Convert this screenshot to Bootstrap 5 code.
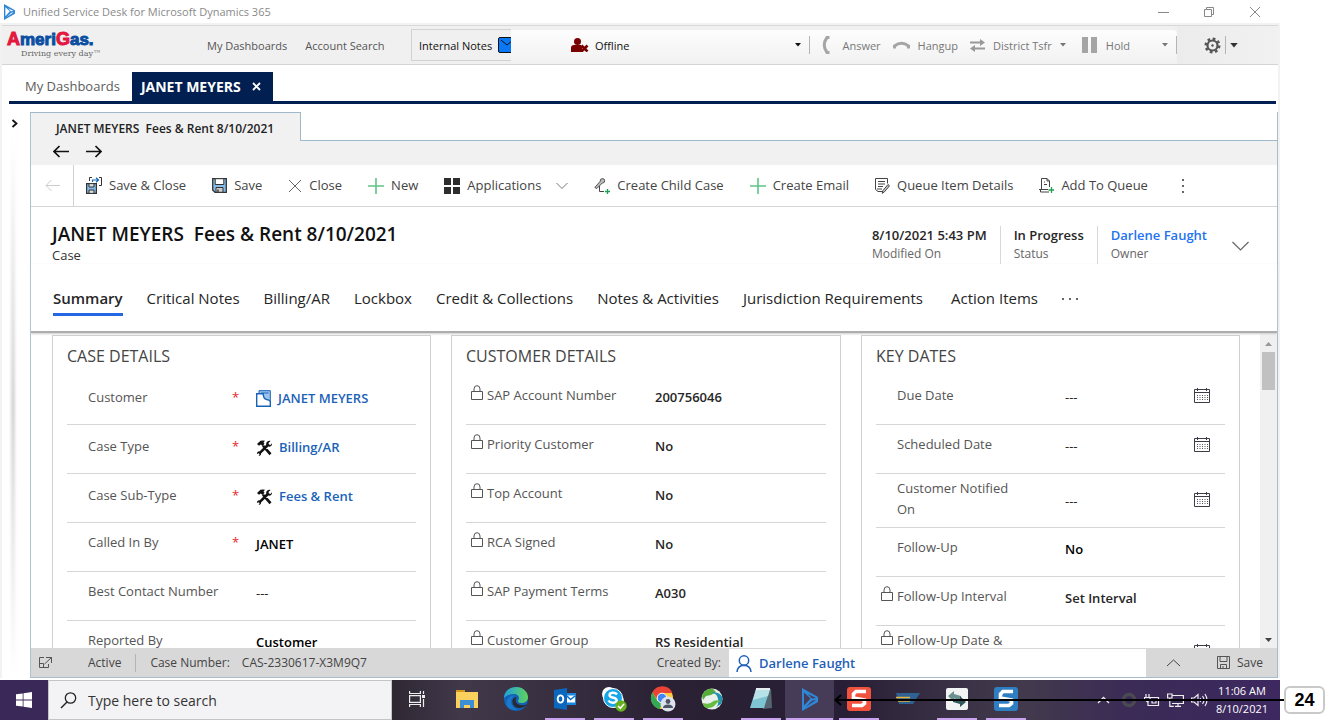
<!DOCTYPE html>
<html lang="en">
<head>
<meta charset="utf-8">
<meta name="viewport" content="width=device-width, initial-scale=1">
<title>Unified Service Desk for Microsoft Dynamics 365</title>
<link href="https://cdn.jsdelivr.net/npm/bootstrap@5.3.0/dist/css/bootstrap.min.css" rel="stylesheet">
<style>
  body { font-family: "Open Sans", "Noto Sans", sans-serif; font-size: 13px; line-height: 21px; color: #333; background: #fff; }
  button, input, select { font: inherit; color: inherit; }
  button { background: none; border: 0; padding: 0; }
  a { text-decoration: none; color: inherit; }
  svg { display: block; flex: none; }
  .desktop { height: 100vh; margin-right: 53px; }
  /* window chrome */
  .title-bar { height: 23px; padding-left: 4px; padding-right: 19px; font-size: 11px; color: #8a8a8a; background: #fff; }
  .window-controls { gap: 34px; }
  .window { background: #f2f2f2; padding: 2px 2px 0; }
  .app-bar { height: 40px; background: #f0f0f0; border-top: 1px solid #d8d8d8; border-bottom: 1px solid #d4d4d4; font-size: 11px; color: #555; }
  .app-bar .brand { width: 205px; padding-left: 5px; }
  .brand-name { font: 900 17px/16px "Liberation Sans", Arial, sans-serif; color: #0a4ea2; -webkit-text-stroke: 1px currentColor; }
  .brand-name b { color: #e4173e; font-size: 18px; font-weight: 900; }
  .brand-line { font: 8px/11px "DejaVu Serif", serif; color: #666; padding-left: 14px; white-space: nowrap; }
  .app-links { width: 204px; gap: 18px; }
  .notes-box { width: 100px; height: 32px; padding-left: 7px; border: 1px solid #d2d2d2; border-right: 0; color: #111; overflow: hidden; }
  .notes-box input { appearance: none; width: 24px; height: 16px; margin: 0; background: #0a78f5; border: 1px solid #111; border-radius: 2px; flex: none; }
  .notes-box label { position: relative; gap: 6px; }
  .notes-box svg { position: absolute; right: 8px; top: 4px; }
  .phone-bar { align-self: stretch; margin-top: 4px; padding-bottom: 4px; background: linear-gradient(#fdfdfd, #f1f1f1); border-radius: 0 4px 0 0; color: #777; padding-left: 60px; }
  .phone-bar select { appearance: none; border: 0; background: none; color: #111; padding: 0; margin-left: 6px; }
  .phone-bar button { display: flex; align-items: center; gap: 8px; margin-left: 12px; }
  .phone-bar .answer { gap: 12px; }
  .bar-tick { width: 1px; height: 18px; background: #b4b4b4; }
  .app-tools { width: 101px; padding-left: 27px; background: linear-gradient(90deg, #ececec, #f1f1f1); align-self: stretch; }
  .workspace { background: #fff; }
  .session-tabs { height: 39px; margin: 0 2px 0 7px; padding-top: 7px; border-bottom: 3px solid #021f52; }
  .session-tabs button { height: 29px; }
  .session-tabs .idle { padding: 0 12px 0 16px; color: #5c5c5c; }
  .session-tabs .current { padding: 0 12px 0 9px; background: #021f52; color: #fff; font-weight: 700; gap: 11px; font-size: 14px; }
  /* collapsed left rail */
  .rail { width: 28px; padding: 15px 0 0 9px; }
  .rail-shade { width: 8px; margin-top: 8px; margin-left: -2px; background: linear-gradient(#fff, transparent 50%, #fff), linear-gradient(90deg, #fff, #d4d4d4, #fff); }
  .work-panel { background: #fff; border-left: 1px solid #a9c3d3; border-right: 1px solid #a9bccb; border-bottom: 1px solid #a9bccb; margin-top: 8px; }
  .page-tab { width: 270px; height: 29px; border-top: 1px solid #9fb9cb; border-right: 1px solid #9fb9cb; background: #f1f1f1; font-size: 12px; font-weight: 600; color: #222; padding: 2px 0 0 25px; }
  .page-tab-rest { border-bottom: 1px solid #9fb9cb; background: #fff; }
  .history { height: 24px; background: #f1f1f1; padding-left: 22px; gap: 17px; }
  .history button { margin-top: -4px; }
  .command-bar { height: 42px; border-bottom: 1px solid #d4d4d4; color: #444; }
  .command-bar .go-back { width: 43px; border-right: 1px solid #d0d0d0; }
  .command-bar .commands { padding-left: 12px; gap: 26px; }
  .commands button { gap: 7px; display: flex; align-items: center; white-space: nowrap; }
  .record-head { padding: 15px 28px 0 21px; }
  .record-head h1 { font-size: 19px; line-height: 24px; font-weight: 600; color: #111; margin: 0; }
  .record-kind { line-height: 18px; }
  .facts > div { padding: 0 13px; height: 38px; border-left: 1px solid #d8d8d8; font-size: 12px; line-height: 17px; color: #666; }
  .facts > div:first-child { border: 0; }
  .facts strong { display: block; font-size: 13px; line-height: 19px; font-weight: 600; color: #262626; }
  .facts .user { color: #2273f0; }
  .head-toggle { margin-left: 12px; padding-top: 6px; }
  .form-tabs { padding: 21px 0 15px 22px; gap: 24px; font-size: 15px; line-height: 27px; color: #262626; border-bottom: 2px solid #adadad; box-shadow: 0 1px 2px #ccc; z-index: 1; position: relative; }
  .form-tabs button { height: 31px; display: flex; white-space: nowrap; }
  .form-tabs .on { font-weight: 600; border-bottom: 3px solid #2566e3; }
  /* form sections */
  .form-body { min-height: 0; flex: 1 1 0; overflow: hidden; }
  .sections { display: grid; grid-template-columns: 379fr 390fr 379fr; gap: 20px; padding: 2px 20px 0 21px; height: 1px; }
  .section { border: 1px solid #d0d0d0; padding: 8px 14px 0; height: 420px; }
  .section h2 { font-size: 16px; line-height: 24px; font-weight: 400; color: #444; margin: 0; padding-bottom: 8px; }
  .field { min-height: 49px; border-bottom: 1px solid #d6d6d6; display: flex; padding-top: 9px; }
  .field.tall { height: 54px; padding-top: 4px; }
  .field .pre { width: 21px; padding-left: 5px; flex: none; }
  .field .cap { width: 142px; flex: none; color: #555; }
  .field .req { width: 26px; padding-left: 2px; flex: none; color: #e8262b; }
  .field .val { flex: 1; margin-top: 2px; font-weight: 600; color: #262626; white-space: nowrap; display: flex; align-items: center; height: 21px; gap: 7px; }
  .field.tall .val { margin-top: 13px; }
  .field a { color: #1b62b9; font-size: 13px; }
  .field.lookup { padding-top: 11px; }
  .field.lookup .val { margin-top: 1px; }
  .field .none { font-weight: 400; }
  .field .pick { margin: -4px 15px 0 auto; }
  .scroll-rail { width: 17px; background: #f0f0f0; padding: 9px 0 6px; z-index: 0; }
  .scroll-thumb { width: 13px; height: 38px; background: #c1c1c1; margin-top: 6px; }
  .status-bar { height: 29px; background: #d8d8d8; font-size: 12px; color: #444; padding-left: 8px; }
  .status-bar .state { margin-left: 36px; }
  .status-bar .bar-tick { margin: 0 14px; }
  .status-bar .case-no { margin-left: 12px; }
  .status-bar .save { gap: 7px; margin: 0 14px 0 16px; }
  .creator { flex: 1 1 417px; max-width: 417px; align-self: stretch; background: #fff; padding-left: 7px; color: #1f5fb8; font-weight: 600; font-size: 13px; gap: 7px; border-top: 1px solid #d8d8d8; }
  /* Windows taskbar */
  .taskbar { height: 40px; margin-top: 2px; background: linear-gradient(90deg, #3a2858 0, #3a2858 4%, #2c2630 30%, #41384a 36%, #372f40 44%, #2a2134 52%, #281f36 66%, #352c42 72%, #423a4c 80%, #3b2b56 88%, #3d2860); color: #fff; }
  .start { width: 48px; }
  .search { width: 344px; height: 40px; background: #f3f3f5; border: 1px solid #c4c4c8; padding-left: 11px; gap: 11px; }
  .search input { border: 0; background: none; outline: 0; width: 260px; font-size: 14px; padding: 0; }
  .search input::placeholder { color: #333; opacity: 1; }
  .app-btn { width: 49px; height: 40px; display: flex; align-items: center; justify-content: center; border-bottom: 2px solid transparent; position: relative; }
  .app-btn.open::after { content: ""; position: absolute; left: 5px; right: 4px; bottom: -2px; height: 2px; background: #c9a2f0; }
  .app-btn.active { background: #473c58; }
  .app-btn.active::after { left: 1px; right: 1px; }
  .task-view { width: 50px; }
  .tray { gap: 7px; padding-right: 11px; }
  .clock { font-size: 11px; line-height: 18px; text-align: center; width: 54px; }
  /* numbered callout over the desktop */
  .callout { position: absolute; right: 8px; bottom: 6px; left: 834px; z-index: 5; pointer-events: none; }
  .callout-line { height: 2px; background: #000; margin-left: 2px; }
  .callout-no { width: 41px; height: 28px; border: 2px solid #c9c9c9; border-radius: 6px; background: #fff; color: #000; font: 700 18px/24px "Liberation Sans", Arial, sans-serif; text-align: center; }
  .callout svg { margin-right: -7px; z-index: 1; }
</style>
</head>
<body class="overflow-hidden position-relative">
<svg width="0" height="0" class="position-absolute" aria-hidden="true">
  <symbol id="lock" viewBox="0 0 12 15"><path d="M.5 6.500h11v8H.5zM3 6.500V4a3 3.300 0 0 1 6 0v2.500" fill="none" stroke="#555"/></symbol>
  <symbol id="cal" viewBox="0 0 16 15"><path d="M.5 1.500h15v13H.5zM.5 4.500h15M3.500 0v3M12.500 0v3" fill="none" stroke="#3c3c46"/><path d="M3 7.500h11M3 9.500h11M3 11.500h11" stroke="#555" stroke-dasharray="1 1.500"/></symbol>
  <symbol id="tools" viewBox="0 0 16 16"><path d="M1 4 4.500.8Q7 0 9 .8L7.500 2.500l1 1.300L6.500 6 4.800 4.500 3 5.800zM6 6.500 8 5l7.500 8.300-2 2zM14.500 1l-2 2 .5 1.500 1.500.4L16 3.200c.3 2.300-1.500 4-3.600 3.400L5 13.500c.3 1.300-1 2.500-2.400 2.300l1-1.600-.8-.9-1.800.8c-.2-1.700 1-3 2.500-2.700l6.700-6.600C9.700 2.500 12 .2 14.500 1z" fill="#111"/></symbol>
  <symbol id="disk" viewBox="0 0 15 15"><path d="M.7.7h13.600v13.600H3L.7 12z" fill="#85bce9" stroke="#333" stroke-width="1.300"/><path d="M3.200.7h8.600v5.800H3.200z" fill="#fff" stroke="#333"/><path d="M4 9.500h7v4.800H4z" fill="#ccc" stroke="#333"/><path d="M6 11.500v3" stroke="#333" stroke-width="1.300"/></symbol>
  <symbol id="plus" viewBox="0 0 16 16"><path d="M8 0v16M0 8h16" stroke="#5fc487" stroke-width="1.600"/></symbol>
  <symbol id="caret" viewBox="0 0 6 4"><path d="M0 0h6L3 3.500z" fill="currentColor"/></symbol>
  <symbol id="dynamics" viewBox="0 0 16 23"><path d="M0 0 16 9v5L0 23z" fill="#2f87d8"/><path d="M2 4.500 8.500 10.500 2 17.500zM6 6l8 4-4 .5zM3.500 19 10.500 12.500 14 12z" fill="currentColor"/></symbol>
</svg>

<div class="desktop d-flex flex-column">
  <header class="title-bar d-flex align-items-center">
    <svg width="11" height="16" color="#fff"><use href="#dynamics"/></svg>
    <span class="ms-2 me-auto">Unified Service Desk for Microsoft Dynamics 365</span>
    <div class="window-controls d-flex">
      <button type="button" aria-label="Minimize"><svg width="12" height="12"><path d="M1 6.500h11" stroke="#888"/></svg></button>
      <button type="button" aria-label="Restore"><svg width="12" height="12" fill="none" stroke="#888"><path d="M1.500 3.500h7v7h-7zM3.500 3.500v-2h7v7h-2"/></svg></button>
      <button type="button" aria-label="Close window"><svg width="12" height="12"><path d="m1 1 10 10M11 1 1 11" stroke="#888"/></svg></button>
    </div>
  </header>

  <div class="window flex-grow-1 d-flex flex-column">
    <div class="app-bar d-flex align-items-center flex-shrink-0">
      <div class="brand"><div class="brand-name"><b>A</b>meri<b>G</b>as.</div><div class="brand-line">Driving every day™</div></div>
      <nav class="app-links d-flex"><a href="#">My Dashboards</a><a href="#">Account Search</a></nav>
      <div class="notes-box d-flex align-items-center"><label class="d-flex align-items-center text-nowrap" for="notes">Internal Notes <input type="checkbox" id="notes"><svg width="14" height="8"><path d="m1 1 6 5 6-5" fill="none" stroke="#111"/></svg></label></div>
      <div class="phone-bar d-flex align-items-center flex-grow-1">
        <svg width="18" height="14" viewBox="0 0 18 14"><circle cx="6.500" cy="3.500" r="3.500" fill="#780000"/><path d="M0 14V10q0-3 3-3h7l1 1.500V14z" fill="#780000"/><path d="m10.500 7.500 6 6m0-6-6 6" stroke="#780000" stroke-width="2.600"/></svg>
        <select aria-label="Presence" class="flex-grow-1"><option>Offline</option></select>
        <svg width="6" height="4" color="#111"><use href="#caret"/></svg>
        <i class="bar-tick ms-2"></i>
        <button type="button" class="answer"><svg width="8" height="18" viewBox="0 0 8 18"><path d="M7.500 1.500H5Q-.5 9 5 16.500h2.500" fill="none" stroke="#a5a5a5" stroke-width="3"/></svg>Answer</button>
        <button type="button"><svg width="17" height="8" viewBox="0 0 17 8"><path d="M1.500 7.500V5q7-5.500 14 0v2.500" fill="none" stroke="#a5a5a5" stroke-width="3"/></svg>Hangup</button>
        <button type="button"><svg width="15" height="13" viewBox="0 0 15 13"><path d="M0 3.500h12M3 9.500h12" stroke="#999" stroke-width="2"/><path d="m10 0 5 3.500L10 7zM5 6 0 9.500 5 13z" fill="#999"/></svg>District Tsfr<svg width="6" height="4"><use href="#caret"/></svg></button>
        <button type="button" class="ms-3"><svg width="16" height="16"><path d="M0 0h6v16H0zM9 0h6v16H9z" fill="#a5a5a5"/></svg>Hold<svg class="ms-4" width="6" height="4"><use href="#caret"/></svg></button>
        <i class="bar-tick ms-2"></i>
      </div>
      <div class="app-tools d-flex align-items-center gap-1">
        <button type="button" aria-label="Settings"><svg width="17" height="17" viewBox="-8.500 -8.500 17 17"><circle r="5" fill="none" stroke="#555" stroke-width="2.200"/><circle r="6.800" fill="none" stroke="#555" stroke-width="2.400" stroke-dasharray="2.700 2.640"/><circle r="1.200" fill="#555"/></svg></button>
        <i class="bar-tick"></i><button type="button" aria-label="More settings"><svg width="8" height="5" color="#333"><use href="#caret"/></svg></button>
      </div>
    </div>

    <div class="workspace flex-grow-1 d-flex flex-column">
      <nav class="session-tabs d-flex flex-shrink-0">
        <button type="button" class="idle">My Dashboards</button>
        <button type="button" class="current d-flex align-items-center">JANET MEYERS <svg width="9" height="9"><path d="m1 1 7 7M8 1 1 8" stroke="#fff" stroke-width="1.800"/></svg></button>
      </nav>
      <div class="d-flex flex-grow-1">
        <div class="rail d-flex flex-column">
          <button type="button" aria-label="Expand panel"><svg width="7" height="9"><path d="m1.500 1 4 3.500-4 3.500" fill="none" stroke="#111" stroke-width="1.800"/></svg></button>
          <div class="rail-shade flex-grow-1"></div>
        </div>
        <main class="work-panel flex-grow-1 d-flex flex-column">
          <div class="d-flex flex-shrink-0"><div class="page-tab d-flex align-items-center">JANET MEYERS&nbsp; Fees &amp; Rent 8/10/2021</div><div class="page-tab-rest flex-grow-1"></div></div>
          <div class="history d-flex align-items-center flex-shrink-0">
            <button type="button" aria-label="Back"><svg width="16" height="13" fill="none" stroke="#111" stroke-width="1.700"><path d="M16 6.500H1M6.500 1 1 6.500 6.500 12"/></svg></button>
            <button type="button" aria-label="Forward"><svg width="16" height="13" fill="none" stroke="#111" stroke-width="1.700"><path d="M0 6.500h15M9.500 1 15 6.500 9.500 12"/></svg></button>
          </div>
          <div class="command-bar d-flex flex-shrink-0">
            <button type="button" class="go-back d-flex align-items-center justify-content-center" aria-label="Go back"><svg width="15" height="13" fill="none" stroke="#ccc"><path d="M15 6.500H1M6.500 1 1 6.500 6.500 12"/></svg></button>
            <div class="commands d-flex align-items-center">
              <button type="button"><svg width="16" height="17" viewBox="0 0 16 17"><path d="M.6 6.600h9.800v9.800H.6z" fill="#85bce9" stroke="#333" stroke-width="1.200"/><path d="M3 6.600h5V10H3zM3 13h5v3.400H3z" fill="#ddd" stroke="#333"/><path d="M3.500 4V.5H6M13 .5h2.500v8H13" fill="none" stroke="#333"/><path d="M6.500 5V3H12M10 .8 12.500 3 10 5.200" fill="none" stroke="#1766b5" stroke-width="1.200"/></svg>Save &amp; Close</button>
              <button type="button"><svg width="15" height="15"><use href="#disk"/></svg>Save</button>
              <button type="button"><svg width="14" height="14"><path d="m1 1 12 12M13 1 1 13" stroke="#666"/></svg>Close</button>
              <button type="button"><svg width="16" height="16"><use href="#plus"/></svg>New</button>
              <button type="button"><svg width="16" height="16"><path d="M0 0h7v7H0zM9 0h7v7H9zM0 9h7v7H0zM9 9h7v7H9z" fill="#2e2e2e"/></svg>Applications<svg class="ms-2" width="12" height="8"><path d="m.5 1 5.500 5.500L11.500 1" fill="none" stroke="#777"/></svg></button>
              <button type="button"><svg width="16" height="16" viewBox="0 0 16 16"><path d="m.8 9.500 5.500-6.300a2.200 2.200 0 1 1 2 1.800L2.800 10.500z" fill="#bbb" stroke="#555"/><path d="M5.500 8v5.500h4.500" fill="none" stroke="#444"/><path d="M13.500 11v5M11 13.500h5" stroke="#1fa050" stroke-width="1.300"/></svg>Create Child Case</button>
              <button type="button"><svg width="16" height="16"><use href="#plus"/></svg>Create Email</button>
              <button type="button"><svg width="15" height="16" viewBox="0 0 15 16" fill="none" stroke="#444"><path d="M8 13.500H3l-2.500-2V.5h12v5M3 3.500h7M3 6h7M3 8.500h5M2 11h5"/><path d="m8 12.500 5-6 1.500 1.300-5 6-2.300 1.500z" fill="#ccc"/></svg>Queue Item Details</button>
              <button type="button"><svg width="15" height="15" viewBox="0 0 15 15" fill="none" stroke="#444"><path d="M2.500 11.500V.5H8L10.500 3v6M8 .5V3h2.500M5 4h1M5 6.500h3M0 11.500h9M1.500 11.500v2.500H10"/><path d="M12.500 9v6M9.500 12h6" stroke="#1fa050" stroke-width="1.300"/></svg>Add To Queue</button>
              <button type="button" aria-label="More commands" class="ms-2"><svg width="3" height="15"><path d="M0 1h2v2H0zM0 7h2v2H0zM0 13h2v2H0z" fill="#666"/></svg></button>
            </div>
          </div>

          <div class="record-head d-flex flex-shrink-0">
            <div class="me-auto"><h1>JANET MEYERS&nbsp; Fees &amp; Rent 8/10/2021</h1><div class="record-kind">Case</div></div>
            <div class="facts d-flex mt-1">
              <div><strong>8/10/2021 5:43 PM</strong>Modified On</div>
              <div><strong>In Progress</strong>Status</div>
              <div><strong><a href="#" class="user">Darlene Faught</a></strong>Owner</div>
            </div>
            <button type="button" aria-label="Expand header" class="head-toggle"><svg width="17" height="10"><path d="m.5 1 8 8 8-8" fill="none" stroke="#666" stroke-width="1.200"/></svg></button>
          </div>
          <nav class="form-tabs d-flex flex-shrink-0">
            <button type="button" class="on me-n1">Summary</button><button type="button">Critical Notes</button><button type="button">Billing/AR</button><button type="button">Lockbox</button><button type="button">Credit &amp; Collections</button><button type="button">Notes &amp; Activities</button><button type="button">Jurisdiction Requirements</button><button type="button" class="ms-1">Action Items</button><button type="button" aria-label="More tabs" class="align-items-center"><svg width="16" height="8"><path d="M0 1h2v2H0zM7 1h2v2H7zM14 1h2v2h-2z" fill="#666"/></svg></button>
          </nav>

          <div class="form-body d-flex">
            <div class="sections flex-grow-1">
              <section class="section">
                <h2>CASE DETAILS</h2>
                <div class="field lookup"><span class="pre"></span><span class="cap">Customer</span><span class="req">*</span><span class="val"><svg width="15" height="17" viewBox="0 0 15 17"><path d="M3 3.500V.7h11.300v11" fill="#9cc5ee" stroke="#1b62b9"/><path d="M5 3h7.500" stroke="#1b62b9"/><path d="M.7 3.700h6.500q0 5 3.500 5.800 3 .5 3.600 2v4.800H.7z" fill="#fff" stroke="#1b62b9" stroke-width="1.400"/></svg><a href="#">JANET MEYERS</a></span></div>
                <div class="field lookup"><span class="pre"></span><span class="cap">Case Type</span><span class="req">*</span><span class="val"><svg width="16" height="16"><use href="#tools"/></svg><a href="#">Billing/AR</a></span></div>
                <div class="field lookup"><span class="pre"></span><span class="cap">Case Sub-Type</span><span class="req">*</span><span class="val"><svg width="16" height="16"><use href="#tools"/></svg><a href="#">Fees &amp; Rent</a></span></div>
                <div class="field"><span class="pre"></span><span class="cap">Called In By</span><span class="req">*</span><span class="val text-black">JANET</span></div>
                <div class="field"><span class="pre"></span><span class="cap">Best Contact Number</span><span class="req"></span><span class="val none">---</span></div>
                <div class="field"><span class="pre"></span><span class="cap">Reported By</span><span class="req"></span><span class="val text-black">Customer</span></div>
              </section>
              <section class="section">
                <h2>CUSTOMER DETAILS</h2>
                <div class="field"><span class="pre"><svg width="12" height="15"><use href="#lock"/></svg></span><span class="cap">SAP Account Number</span><span class="req"></span><span class="val">200756046</span></div>
                <div class="field"><span class="pre"><svg width="12" height="15"><use href="#lock"/></svg></span><span class="cap">Priority Customer</span><span class="req"></span><span class="val">No</span></div>
                <div class="field"><span class="pre"><svg width="12" height="15"><use href="#lock"/></svg></span><span class="cap">Top Account</span><span class="req"></span><span class="val">No</span></div>
                <div class="field"><span class="pre"><svg width="12" height="15"><use href="#lock"/></svg></span><span class="cap">RCA Signed</span><span class="req"></span><span class="val">No</span></div>
                <div class="field"><span class="pre"><svg width="12" height="15"><use href="#lock"/></svg></span><span class="cap">SAP Payment Terms</span><span class="req"></span><span class="val">A030</span></div>
                <div class="field"><span class="pre"><svg width="12" height="15"><use href="#lock"/></svg></span><span class="cap">Customer Group</span><span class="req"></span><span class="val">RS Residential</span></div>
              </section>
              <section class="section">
                <h2>KEY DATES</h2>
                <div class="field"><span class="pre"></span><span class="cap">Due Date</span><span class="req"></span><span class="val none">---<button type="button" class="pick" aria-label="Pick due date"><svg width="16" height="15"><use href="#cal"/></svg></button></span></div>
                <div class="field"><span class="pre"></span><span class="cap">Scheduled Date</span><span class="req"></span><span class="val none">---<button type="button" class="pick" aria-label="Pick scheduled date"><svg width="16" height="15"><use href="#cal"/></svg></button></span></div>
                <div class="field tall"><span class="pre"></span><span class="cap">Customer Notified<br>On</span><span class="req"></span><span class="val none">---<button type="button" class="pick" aria-label="Pick notified date"><svg width="16" height="15"><use href="#cal"/></svg></button></span></div>
                <div class="field"><span class="pre"></span><span class="cap">Follow-Up</span><span class="req"></span><span class="val text-black">No</span></div>
                <div class="field"><span class="pre"><svg width="12" height="15"><use href="#lock"/></svg></span><span class="cap">Follow-Up Interval</span><span class="req"></span><span class="val">Set Interval</span></div>
                <div class="field tall"><span class="pre"><svg width="12" height="15"><use href="#lock"/></svg></span><span class="cap">Follow-Up Date &amp;</span><span class="req"></span><span class="val none"><button type="button" class="pick" aria-label="Pick follow-up date"><svg width="16" height="15"><use href="#cal"/></svg></button></span></div>
              </section>
            </div>
            <div class="scroll-rail d-flex flex-column align-items-center flex-shrink-0">
              <svg width="7" height="4"><path d="M0 4h7L3.500 0z" fill="#999"/></svg>
              <div class="scroll-thumb"></div>
              <svg class="mt-auto" width="7" height="4"><path d="M0 0h7L3.500 4z" fill="#444"/></svg>
            </div>
          </div>

          <footer class="status-bar d-flex align-items-center flex-shrink-0">
            <button type="button" aria-label="Pop out"><svg width="13" height="11" fill="none" stroke="#555"><path d="M5 .5H.5v10h9V7M.5 6.500h4v4M7 .5h5.500V6M5.500 7l7-6.500"/></svg></button>
            <span class="state">Active</span>
            <i class="bar-tick"></i>
            <span>Case Number:</span><span class="case-no me-auto">CAS-2330617-X3M9Q7</span>
            <span class="me-2">Created By:</span>
            <a href="#" class="creator d-flex align-items-center"><svg width="16" height="17" viewBox="0 0 16 17" fill="none" stroke="#1f5fb8" stroke-width="1.500"><circle cx="8" cy="5.500" r="4.700"/><path d="M1 17q.5-6.500 7-6.800Q14.500 10.500 15 17"/></svg>Darlene Faught</a>
            <button type="button" aria-label="Expand footer" class="mx-3 px-1"><svg width="15" height="8"><path d="m1 7 6.500-6L14 7" fill="none" stroke="#444"/></svg></button>
            <button type="button" class="save d-flex align-items-center"><svg width="13" height="13" fill="none" stroke="#555"><path d="M.5.5h12v12H.5zM3 .5h7v5H3zM3.500 12.500v-4h6v4M6 10v2.500"/></svg>Save</button>
          </footer>
        </main>
      </div>
    </div>
  </div>

  <footer class="taskbar d-flex align-items-stretch flex-shrink-0">
    <button type="button" class="start d-flex align-items-center justify-content-center" aria-label="Start"><svg width="16" height="16" viewBox="0 0 16 16"><path d="M0 2.300 6.700 1.400v6.200H0zM7.500 1.200 16 0v7.600H7.500zM0 8.400h6.700v6.200L0 13.700zM7.500 8.400H16V16l-8.500-1.200z" fill="#fff"/></svg></button>
    <div class="search d-flex align-items-center flex-shrink-0"><svg width="17" height="17"><circle cx="10.500" cy="6" r="5.200" fill="none" stroke="#222" stroke-width="1.300"/><path d="M7 10 1 16" stroke="#222" stroke-width="1.500"/></svg><input type="text" aria-label="Search" placeholder="Type here to search"></div>
    <button type="button" class="app-btn task-view" aria-label="Task view"><svg width="17" height="16" fill="none" stroke="#eee" stroke-width="1.200"><path d="M.6 0v2.500h10.800V0M.6 4.600h10.800v6.800H.6zM.6 16v-2.500h10.800V16M14.500 0v3M14.500 8v8"/><path d="M13 4h3v3h-3z" fill="#eee" stroke="none"/></svg></button>
    <button type="button" class="app-btn" aria-label="File Explorer"><svg width="22" height="18" viewBox="0 0 22 18"><path d="M0 0h9v3H0z" fill="#d99a1c"/><path d="M0 2h22v16H0z" fill="#fad15c"/><path d="M4 18v-8h14v8h-4v-3H8v3z" fill="#3c8fd6"/></svg></button>
    <button type="button" class="app-btn" aria-label="Edge"><svg width="24" height="24" viewBox="0 0 24 24"><defs><linearGradient id="eg"><stop stop-color="#219fe0"/><stop offset="1" stop-color="#5fd35a"/></linearGradient></defs><circle cx="12" cy="12" r="12" fill="#1263b5"/><path d="M0 11C0 4 6 0 12 0c7 0 12 5 12 10 0 4-3 6-7 6-2 0-3-1-3-2s1-1 1-3-2-4-5-4-7 1-10 4z" fill="url(#eg)"/><path d="M9 12c-2 4 1 9 6 9 4 0 7-2 8-4-3 2-9 2-11-2-1-2 0-4 1-5-2 0-3 1-4 2z" fill="#2a2832"/><path d="M8 11c-3 5 1 11 6 11q-7 3-11-3C1 14 4 10 10 8z" fill="#1a78cf"/></svg></button>
    <button type="button" class="app-btn open" aria-label="Outlook"><svg width="22" height="22" viewBox="0 0 22 22"><path d="M12 5h10v12H12z" fill="#1b86dd"/><path d="M13 7.500h8v7h-8z" fill="#fff"/><path d="m13 8 3.500 3.500L21 8" fill="none" stroke="#0f6fc5" stroke-width="1.500"/><path d="M0 2 13 0v22L0 20z" fill="#0b67bd"/><ellipse cx="6.500" cy="11" rx="2.800" ry="3.600" fill="none" stroke="#fff" stroke-width="1.900"/></svg></button>
    <button type="button" class="app-btn open" aria-label="Skype"><svg width="26" height="26" viewBox="0 0 26 26"><circle cx="8" cy="8" r="7" fill="#fff"/><circle cx="16" cy="15" r="7" fill="#fff"/><circle cx="12" cy="12" r="9.500" fill="#17a6e8" stroke="#fff"/><path d="M16 8.500q-1.500-2-4.500-1.800c-4 .5-4 4 0 4.800 5.500 1 5.500 4.800.5 5.300Q9 17 7.500 14.500" fill="none" stroke="#fff" stroke-width="2.400"/><circle cx="20" cy="20" r="5.700" fill="#68b01f"/><path d="m17 20 2.300 2.300L23 18" fill="none" stroke="#fff" stroke-width="1.500"/></svg></button>
    <button type="button" class="app-btn open" aria-label="Chrome"><svg width="26" height="26" viewBox="0 0 26 26"><circle cx="12" cy="12" r="11" fill="#ffca3e"/><path d="M2.500 6.500A11 11 0 0 1 22.500 7H12l-4.500 7z" fill="#ea4335"/><path d="m2.500 6.500 5 8.500 5 2-3 6A11 11 0 0 1 2.500 6.500z" fill="#34a853"/><circle cx="12" cy="12" r="4.800" fill="#4285f4" stroke="#fff"/><circle cx="18" cy="18" r="7.500" fill="#dfe2ea"/><circle cx="18" cy="15.500" r="2.400" fill="#4c5468"/><path d="M13 22q0-3.500 5-3.500t5 3.500z" fill="#4c5468"/></svg></button>
    <button type="button" class="app-btn" aria-label="Connect"><svg width="22" height="22" viewBox="0 0 22 22"><circle cx="11" cy="11" r="10.500" fill="#e9f1ec"/><path d="M1 8c2-6 7-8 11-7l3 3-5 3-5 1-3 4z" fill="#55ad39"/><path d="M9 5q7-1 8 6t-3 9l6-4q3-6 0-9-4-4-11-2z" fill="#2391ae"/><path d="M2 15q6 2 9-1t9-1q-4 1-6 4t-7 3-5-5z" fill="#67bc43"/></svg></button>
    <button type="button" class="app-btn open" aria-label="Notepad"><svg width="22" height="22" viewBox="0 0 22 22"><path d="M7 1h14l1 19-9 1z" fill="#55666f"/><path d="M6 1h14l-6 19H0z" fill="#7fc4d3"/><path d="M6 1h14l-2 7L3 12z" fill="#b6e2e8"/><path d="M6 1h14" stroke="#e8eef0" stroke-width="2"/></svg></button>
    <button type="button" class="app-btn open active" aria-label="Dynamics"><svg width="16" height="23" color="#473c58"><use href="#dynamics"/></svg></button>
    <button type="button" class="app-btn open" aria-label="Snagit capture"><svg width="24" height="24" viewBox="0 0 24 24"><rect width="24" height="24" rx="3" fill="#f0523e"/><path d="M19 4.500H9L6.500 7v4l11 2v3.500L15 18.500H5" fill="none" stroke="#fff" stroke-width="3.600"/></svg></button>
    <button type="button" class="app-btn" aria-label="Desk tool"><svg width="24" height="12" viewBox="0 0 24 12"><path d="M0 0h24l-7 11H3z" fill="#2f6292"/><path d="M0 4.500h14M2 8h12" stroke="#e6b43c" stroke-width="1.600"/></svg></button>
    <button type="button" class="app-btn open" aria-label="Sync tool"><svg width="22" height="22" viewBox="0 0 22 22"><rect width="22" height="22" rx="2" fill="#f2f4f4"/><path d="M8 3 2 8l5 5 1-2.500 7 1.500V8L8 6z" fill="#6d9191"/><path d="m14 8 6 6-6 5v-3l-7-2v-3l7 1z" fill="#31575c"/></svg></button>
    <button type="button" class="app-btn open" aria-label="Snagit editor"><svg width="24" height="24" viewBox="0 0 24 24"><rect width="24" height="24" rx="3" fill="#2f7ec2"/><path d="M19 4.500H9L6.500 7v4l11 2v3.500L15 18.500H5" fill="none" stroke="#fff" stroke-width="3.600"/></svg></button>
    <div class="tray d-flex align-items-center ms-auto">
      <svg width="13" height="8"><path d="m1 7 5.500-5.500L12 7" fill="none" stroke="#eee" stroke-width="1.300"/></svg>
      <svg class="ms-1" width="16" height="16"><circle cx="8" cy="8" r="5.500" fill="none" stroke="#4b4a50" stroke-width="3.500"/></svg>
      <svg width="16" height="13" fill="none" stroke="#eee" stroke-width="1.200"><path d="M6 3.500h8.500v8H4V8M2 0v3M5 0v3M.5 3.500h5.500v2L3.500 8 .5 5.500zM8 6h4v3H8z"/></svg>
      <svg width="17" height="14" fill="none" stroke="#eee" stroke-width="1.200"><path d="M5 2.500h11.400v8H5M8 13.400h6M11 10.500v3M.6 1h4.400v4H.6zM2.800 5v8.400h4"/></svg>
      <svg width="17" height="14" fill="none" stroke="#eee" stroke-width="1.200"><path d="M.6 5v4h2.500L7 12.500v-11L3.100 5zM9 5q1.500 2 0 4M11.500 3q3 4 0 8M14 1q4 6 0 12"/></svg>
      <div class="clock">11:06 AM<br>8/10/2021</div>
    </div>
  </footer>
</div>

<div class="callout d-flex align-items-center" role="note" aria-label="Step 24">
  <svg width="8" height="12"><path d="M7 1 1.500 6 7 11" fill="none" stroke="#000" stroke-width="2"/></svg>
  <div class="callout-line flex-grow-1"></div>
  <div class="callout-no">24</div>
</div>
<script src="https://cdn.jsdelivr.net/npm/bootstrap@5.3.0/dist/js/bootstrap.bundle.min.js"></script>
</body>
</html>
